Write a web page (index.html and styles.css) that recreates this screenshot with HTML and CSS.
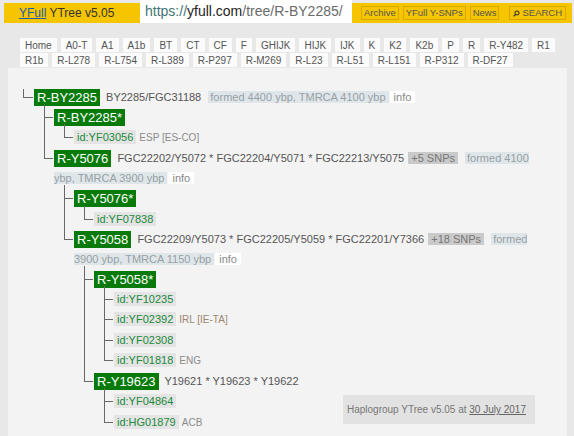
FILE: index.html
```html
<!DOCTYPE html>
<html lang="en">
<head>
<meta charset="utf-8">
<title>YFull YTree v5.05 - R-BY2285</title>
<link rel="stylesheet" href="styles.css">
</head>
<body>
<header class="top">
  <div class="brand"><a href="#">YFull</a> YTree v5.05</div>
  <div class="url"><span class="proto">https://</span><span class="host">yfull.com</span><span class="path">/tree/R-BY2285/</span></div>
  <div class="menu">
    <span class="btn">Archive</span>
    <span class="btn">YFull Y-SNPs</span>
    <span class="btn">News</span>
    <span class="btn search"><svg class="mag" viewBox="0 0 8 8" width="7" height="7"><circle cx="4.6" cy="3.4" r="2.3" fill="none" stroke="#333" stroke-width="1.2"/><line x1="3" y1="5" x2="0.8" y2="7.2" stroke="#333" stroke-width="1.4"/></svg>SEARCH</span>
  </div>
</header>

<nav class="tabs">
  <span class="tab">Home</span><span class="tab">A0-T</span><span class="tab">A1</span><span class="tab">A1b</span><span class="tab">BT</span><span class="tab">CT</span><span class="tab">CF</span><span class="tab">F</span><span class="tab">GHIJK</span><span class="tab">HIJK</span><span class="tab">IJK</span><span class="tab">K</span><span class="tab">K2</span><span class="tab">K2b</span><span class="tab">P</span><span class="tab">R</span><span class="tab">R-Y482</span><span class="tab">R1</span><span class="tab">R1b</span><span class="tab">R-L278</span><span class="tab">R-L754</span><span class="tab">R-L389</span><span class="tab">R-P297</span><span class="tab">R-M269</span><span class="tab">R-L23</span><span class="tab">R-L51</span><span class="tab">R-L151</span><span class="tab">R-P312</span><span class="tab">R-DF27</span>
</nav>

<main class="panel">
  <div class="stack">
    <ul class="tree">
      <li class="rootli"><span class="node">R-BY2285</span> <span class="snps">BY2285/FGC31188</span> <span class="age">formed 4400 ybp, TMRCA 4100 ybp</span><span class="info">info</span>
        <ul>
          <li><span class="node">R-BY2285*</span>
            <ul>
              <li><span class="sid">id:YF03056</span> <span class="geo">ESP [ES-CO]</span></li>
            </ul>
          </li>
          <li><span class="node">R-Y5076</span> <span class="snps">FGC22202/Y5072 * FGC22204/Y5071 * FGC22213/Y5075</span> <span class="more">+5 SNPs</span> <span class="age">formed 4100 ybp, TMRCA 3900 ybp</span><span class="info">info</span>
            <ul>
              <li><span class="node">R-Y5076*</span>
                <ul>
                  <li><span class="sid">id:YF07838</span></li>
                </ul>
              </li>
              <li><span class="node">R-Y5058</span> <span class="snps">FGC22209/Y5073 * FGC22205/Y5059 * FGC22201/Y7366</span> <span class="more">+18 SNPs</span> <span class="age">formed 3900 ybp, TMRCA 1150 ybp</span><span class="info">info</span>
                <ul>
                  <li><span class="node">R-Y5058*</span>
                    <ul>
                      <li><span class="sid">id:YF10235</span></li>
                      <li><span class="sid">id:YF02392</span> <span class="geo irl">IRL [IE-TA]</span></li>
                      <li><span class="sid">id:YF02308</span></li>
                      <li><span class="sid">id:YF01818</span> <span class="geo">ENG</span></li>
                    </ul>
                  </li>
                  <li><span class="node">R-Y19623</span> <span class="snps">Y19621 * Y19623 * Y19622</span>
                    <ul>
                      <li><span class="sid">id:YF04864</span></li>
                      <li><span class="sid">id:HG01879</span> <span class="geo">ACB</span></li>
                    </ul>
                  </li>
                </ul>
              </li>
            </ul>
          </li>
        </ul>
      </li>
    </ul>
    <div class="stamp">Haplogroup YTree v5.05 at <a href="#">30 July 2017</a></div>
  </div>
</main>
</body>
</html>
```
FILE: styles.css
```css
html, body {
  margin: 0;
  padding: 0;
}
body {
  background: #e8e8e8;
  font-family: "Liberation Sans", Arial, sans-serif;
  color: #444;
  width: 574px;
  height: 436px;
  overflow: hidden;
}

/* header */
.top {
  display: flex;
  align-items: flex-end;
  height: 23px;
  padding-left: 4px;
}
.brand {
  flex: none;
  width: 121px;
  height: 20px;
  padding-left: 15px;
  background: #f5c500;
  font-size: 12px;
  line-height: 20px;
  color: #333;
}
.brand a {
  color: #1d5cae;
}
.url {
  flex: none;
  width: 207px;
  height: 23px;
  padding-left: 5px;
  background: #fff;
  font-size: 14px;
  line-height: 22px;
  color: #6a6a6a;
  white-space: nowrap;
}
.url .proto { color: #3f7576; }
.url .host { color: #222; }
.menu {
  flex: none;
  display: flex;
  align-items: center;
  gap: 4px;
  width: 211px;
  height: 20px;
  padding-left: 9px;
  background: #f5c500;
}
.btn {
  flex: none;
  display: inline-flex;
  align-items: center;
  height: 12px;
  padding: 0 2px;
  border: 1px solid #dca600;
  font-size: 9.5px;
  line-height: 12px;
  color: #555;
  white-space: nowrap;
}
.btn.search {
  margin-left: 6px;
  padding: 0 3px;
  gap: 2px;
}
.mag { display: block; }

/* tabs */
.tabs {
  display: flex;
  flex-wrap: wrap;
  gap: 1px 4px;
  margin: 15px 8px 0 20px;
}
.tab {
  height: 14px;
  padding: 0 5px;
  background: #fbfbfb;
  font-size: 10px;
  line-height: 15px;
  color: #555;
}

/* panel */
.panel {
  margin: 1px 7px 0 8px;
  padding: 19px 25px 0 15px;
  background: #f3f3f3;
  min-height: 400px;
}
.stack {
  display: grid;
}
.stack > * {
  grid-area: 1 / 1;
}
.tree, .tree ul {
  list-style: none;
  margin: 0;
  padding: 0;
}
.tree ul {
  margin-left: 10px;
}
.tree li {
  position: relative;
  padding-left: 10px;
  font-size: 11px;
  line-height: 20.1px;
  color: #555;
}
.tree li::before {
  content: "";
  position: absolute;
  left: 0;
  top: -3px;
  width: 8px;
  height: 13px;
  border-left: 1px solid #686868;
  border-bottom: 1px solid #686868;
}
.tree li:not(:last-child)::after {
  content: "";
  position: absolute;
  left: 0;
  top: 0;
  bottom: 0;
  border-left: 1px solid #686868;
}
.tree > li.rootli {
  padding-left: 11px;
}
.tree > li.rootli::before {
  top: 2px;
  width: 9px;
  height: 8px;
}
.node {
  display: inline-block;
  padding: 0 3px;
  margin: 2px 3px 0 0;
  background: #087a0a;
  color: #fff;
  font-size: 13px;
  line-height: 17px;
  vertical-align: top;
}
.snps {
  color: #555;
}
.age {
  margin-left: 4px;
  padding: 0 3px 0 2px;
  background: #dfe6ea;
  color: #97a1a5;
}
.info {
  margin-left: 1px;
  padding: 0 4px;
  background: #fff;
  color: #888;
}
.more {
  margin-left: 1px;
  padding: 0 3px;
  background: #cacaca;
  color: #777;
}
.sid {
  display: inline-block;
  padding: 0 3px;
  margin-top: 3px;
  background: #e4e4e4;
  color: #21893a;
  font-size: 11px;
  line-height: 14px;
  vertical-align: top;
}
.geo {
  font-size: 10px;
  color: #8b8b8b;
}
.geo.irl {
  color: #9d8670;
}

.stamp {
  justify-self: end;
  align-self: start;
  margin: 308px 7px 0 0;
  padding: 9px 9px 9px 4px;
  background: #e2e2e2;
  font-size: 10px;
  line-height: 11px;
  color: #777;
}
.stamp a {
  color: #666;
}
```
